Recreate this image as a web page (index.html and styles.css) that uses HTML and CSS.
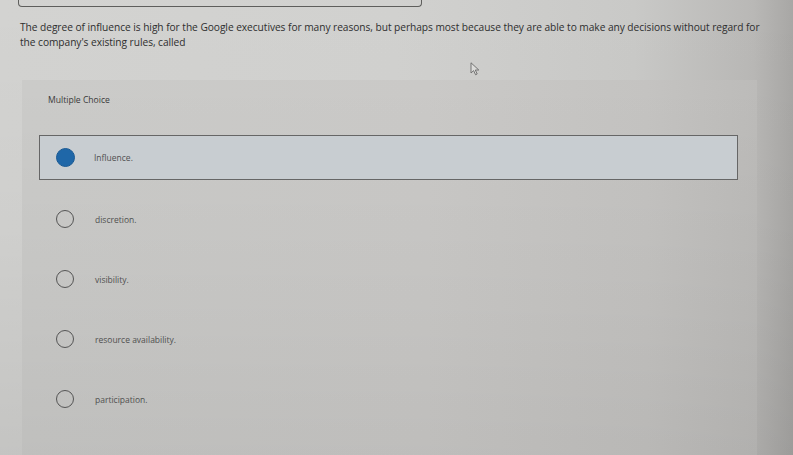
FILE: index.html
```html
<!DOCTYPE html>
<html>
<head>
<meta charset="utf-8">
<link rel="stylesheet" href="styles.css">
</head>
<body>
<div class="page">
  <div class="topbox"></div>
  <p class="question">The degree of influence is high for the Google executives for many reasons, but perhaps most because they are able to make any decisions without regard for the company's existing rules, called</p>
  <div class="cursor-row">
    <svg class="cursor" width="10" height="14" viewBox="0 0 10 14"><path d="M1 0.8 L1 11 L3.6 8.6 L5.6 12.8 L7.2 12 L5.3 8 L8.8 8 Z" fill="#dcdcda" stroke="#6a6a6a" stroke-width="0.9"/></svg>
  </div>
  <div class="panel">
    <div class="label">Multiple Choice</div>
    <div class="options">
      <div class="option selected"><span class="radio filled"></span><span class="opt-text">Influence.</span></div>
      <div class="option"><span class="radio"></span><span class="opt-text">discretion.</span></div>
      <div class="option"><span class="radio"></span><span class="opt-text">visibility.</span></div>
      <div class="option"><span class="radio"></span><span class="opt-text">resource availability.</span></div>
      <div class="option"><span class="radio"></span><span class="opt-text">participation.</span></div>
    </div>
  </div>
</div>
</body>
</html>
```
FILE: styles.css
```css
html, body {
  margin: 0;
  padding: 0;
  width: 793px;
  height: 455px;
  overflow: hidden;
}
body {
  background:
    linear-gradient(180deg, rgba(0,0,0,0) 0%, rgba(0,0,0,0.02) 50%, rgba(0,0,0,0.07) 100%),
    linear-gradient(90deg, #d3d3d1 0%, #d1d1cf 50%, #c9c9c7 80%, #b9b8b6 95%, #a8a7a5 100%);
  font-family: "Open Sans", "Liberation Sans", sans-serif;
}
.page {
  height: 455px;
}
.topbox {
  margin-left: 18px;
  width: 402px;
  height: 6px;
  border: 1px solid #5e5e5c;
  border-top: none;
  border-radius: 0 0 4px 4px;
}
.question {
  margin: 13px 30px 0 20px;
  font-size: 10.2px;
  line-height: 15px;
  color: #2e2e2e;
  letter-spacing: -0.05px;
}
.cursor-row {
  height: 30px;
  padding-left: 470px;
  padding-top: 12px;
  box-sizing: border-box;
}
.cursor {
  display: block;
}
.panel {
  margin-left: 22px;
  width: 735px;
  height: 375px;
  background:
    linear-gradient(180deg, rgba(0,0,0,0) 0%, rgba(0,0,0,0.03) 60%, rgba(0,0,0,0.06) 100%),
    linear-gradient(90deg, #cbcbc9 0%, #cac9c7 55%, #c4c3c1 85%, #bcbbb9 100%);
  padding-top: 14px;
  box-sizing: border-box;
}
.label {
  padding-left: 26px;
  font-size: 8.6px;
  line-height: 12px;
  color: #3a3a3a;
}
.options {
  margin-top: 29px;
  padding-left: 17px;
  display: flex;
  flex-direction: column;
}
.option {
  display: flex;
  align-items: center;
  height: 60px;
  width: 699px;
  box-sizing: border-box;
  padding-left: 17px;
}
.option.selected {
  height: 45px;
  margin-bottom: 9px;
  border: 1px solid #666;
  background: #c8cdd1;
  padding-left: 16px;
}
.radio {
  width: 18px;
  height: 18px;
  border-radius: 50%;
  border: 1.5px solid #555;
  box-sizing: border-box;
  flex: none;
}
.radio.filled {
  width: 19px;
  height: 19px;
  background: #1f67a8;
  border: 1px solid #1a5a94;
}
.opt-text {
  margin-left: 21px;
  font-size: 8.5px;
  color: #505050;
}
.selected .opt-text {
  margin-left: 19px;
}
```
